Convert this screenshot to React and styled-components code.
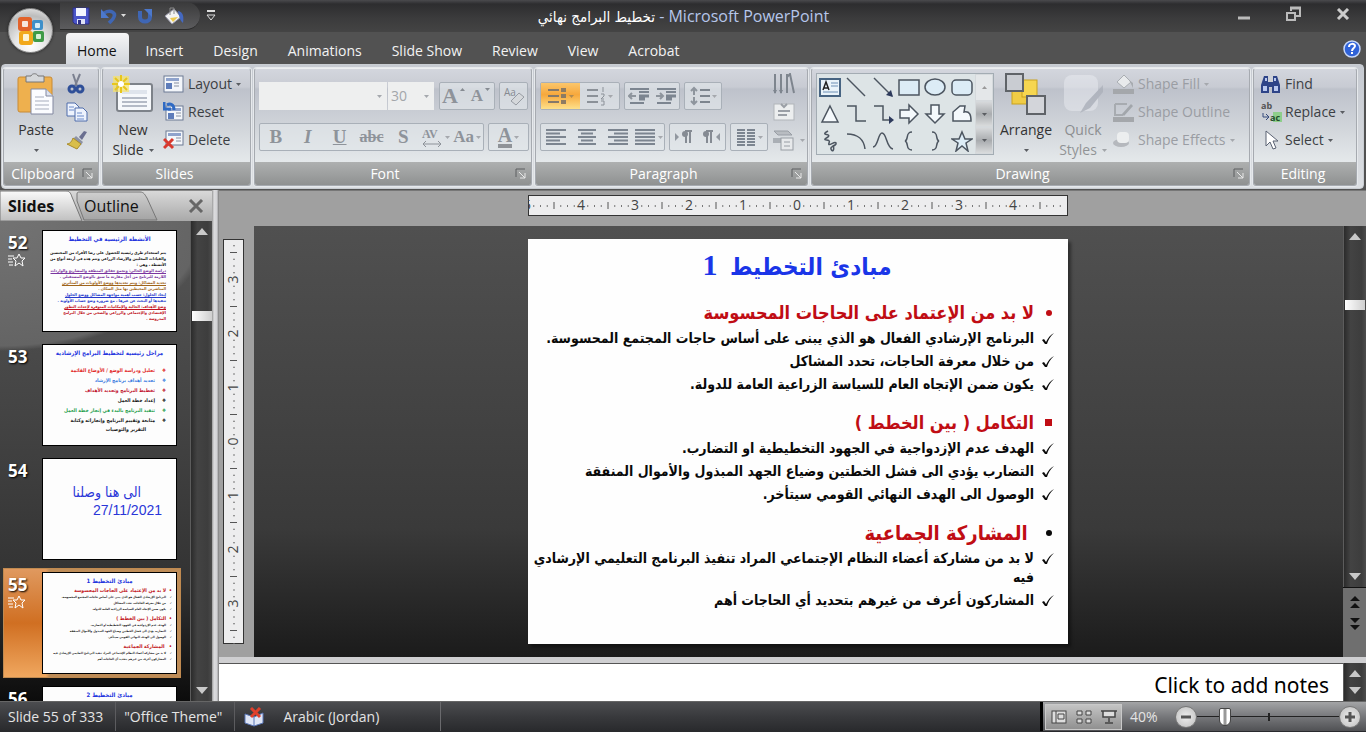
import React from "react";
import styled, { createGlobalStyle, css } from 'styled-components';

const GlobalStyle = createGlobalStyle`
    * {
        box-sizing: border-box;
    }
    body {
        margin: 0;
        background: #525252;
        font-family: "Open Sans", "DejaVu Sans Condensed", "DejaVu Sans", sans-serif;
        font-size: 14px;
        line-height: 20px;
        color: #333;
    }
    button, input, select {
        font: inherit;
        color: inherit;
        margin: 0;
        padding: 0;
        border: 0;
        background: none;
    }
    svg {
        display: block;
        flex: none;
    }
`

const arabicFont = css`
    font-family: "DejaVu Sans Condensed", "DejaVu Sans", sans-serif;
`

const Window = styled.div`
    display: flex;
    flex-direction: column;
    height: 100vh;
    overflow: hidden;
`

/* ---------- title bar ---------- */

const TopArea = styled.header`
    position: relative;
    flex: none;
`

const TitleBar = styled.div`
    display: flex;
    align-items: center;
    height: 32px;
    padding: 0 16px 0 60px;
    background: linear-gradient(#4a4a4d 0, #2d2d2f 4px, #3b3b3c 18px, #444 100%);
`

const QuickAccess = styled.div`
    display: flex;
    align-items: center;
    gap: 10px;
    width: 140px;
    height: 28px;
    padding-left: 12px;
    border-radius: 0 14px 14px 0;
    border-bottom: 1px solid #2a2a2a;
    background: linear-gradient(#3a3a3b, #5c5c5e);
`

const IconButton = styled.button`
    display: flex;
    align-items: center;
    justify-content: center;
    gap: 3px;
`

const WindowTitle = styled.h1`
    flex: 1;
    margin: 0;
    text-align: center;
    font-size: 16px;
    font-weight: 400;
    color: #b6c6ea;
    padding-right: 92px;
`

const DocName = styled.span`
    ${arabicFont}
    font-size: 15px;
    color: #fff;
`

const WindowButtons = styled.div`
    display: flex;
    align-items: center;
    gap: 34px;
    height: 28px;
    align-self: flex-start;
`

const OfficeButton = styled.button`
    position: absolute;
    left: 8px;
    top: 8px;
    width: 45px;
    height: 45px;
    border-radius: 50%;
    border: 1px solid #8a8a8a;
    display: flex;
    align-items: center;
    justify-content: center;
    background: radial-gradient(circle at 50% 85%, #fff 0, #e8e8e8 35%, #bcbcbc 70%, #f4f4f4 100%);
    box-shadow: 0 0 3px #222;
`

const TabBar = styled.nav`
    display: flex;
    height: 32px;
    padding: 1px 5px 0 66px;
    background: #525252;
`

const Tab = styled.button`
    height: 31px;
    padding: 4px 15px 0;
    color: #f2f2f2;
    ${p => p.$active && css`
        padding: 4px 12px 0 11px;
        margin-right: 2px;
        color: #111;
        border-radius: 4px 4px 0 0;
        background: linear-gradient(#f6f6f6, #e0e2e6 60%, #d2d6dc);
    `}
`

const HelpButton = styled(IconButton)`
    margin-left: auto;
`

/* ---------- ribbon ---------- */

const Ribbon = styled.div`
    display: flex;
    flex: none;
    gap: 3px;
    height: 125px;
    margin: 0 2px 1px 1px;
    padding: 3px 6px 2px 1px;
    border-radius: 4px;
    border: 1px solid #c9cdd2;
    background: linear-gradient(#c6cad1, #dcdfe3);
`

const Group = styled.section`
    display: flex;
    flex-direction: column;
    flex: ${p => p.$grow ? 1 : '0 0 auto'};
    width: ${p => p.$width}px;
    border: 1px solid #a6aab0;
    border-top-color: #eceef0;
    border-radius: 3px;
    background: linear-gradient(#d3d6dd 0, #c8cbd3 18px, #bec2cb 20px, #d2d6db 60px, #e6eaec 96px);
    box-shadow: 0 0 0 1px #e6e9ec;
`

const GroupBody = styled.div`
    display: flex;
    gap: ${p => p.$gap || 0}px;
    flex: 1;
    padding: 1px ${p => p.$pad || 4}px 0;
`

const Caption = styled.div`
    display: flex;
    align-items: center;
    height: 23px;
    padding-right: 4px;
    color: #fff;
    background: linear-gradient(#aeb0b0, #8f9191);
    border-radius: 0 0 2px 2px;
`

const CaptionText = styled.span`
    flex: 1;
    text-align: center;
`

const BigButton = styled.button`
    display: flex;
    flex-direction: column;
    align-items: center;
    width: ${p => p.$width}px;
    padding-top: 3px;
    opacity: ${p => p.disabled ? 0.45 : 1};
`

const BigIcon = styled.span`
    display: flex;
    align-items: center;
    justify-content: center;
    height: 42px;
    margin-bottom: 5px;
`

const BigLabel = styled.span`
    display: flex;
    align-items: center;
    justify-content: center;
    gap: 5px;
    height: 20px;
`

const Stack = styled.div`
    display: flex;
    flex-direction: column;
    justify-content: flex-start;
`

const SmallButton = styled.button`
    display: flex;
    align-items: center;
    gap: 4px;
    height: 28px;
    white-space: nowrap;
    color: ${p => p.disabled ? '#9a9da3' : '#3c3f44'};
`

const IconSlot = styled.span`
    display: flex;
    align-items: center;
    justify-content: center;
    width: 21px;
`

const Rows = styled.div`
    display: flex;
    flex-direction: column;
    gap: 13px;
    padding-top: 12px;
`

const Row = styled.div`
    display: flex;
    gap: 4px;
`

const Box = styled.div`
    display: flex;
    align-items: stretch;
    width: ${p => p.$width}px;
    height: 28px;
    border: 1px solid #a9b0b8;
    border-radius: 2px;
    background: rgba(226, 231, 235, 0.6);
`

const Tool = styled.button`
    display: flex;
    flex: 1;
    align-items: center;
    justify-content: center;
    gap: 2px;
    color: #8e939a;
    ${p => p.$on && css`
        background: linear-gradient(#fbc66b, #f7a83c 45%, #fde08a);
    `}
`

const Superscript = styled.span`
    align-self: flex-start;
    padding-top: 5px;
`

const Letter = styled.span`
    font-family: "Liberation Serif", serif;
    font-size: ${p => p.$size || 19}px;
    font-weight: 700;
    font-style: ${p => p.$italic ? 'italic' : 'normal'};
    text-decoration: ${p => p.$line || 'none'};
    border-bottom: ${p => p.$bar ? '4px solid #8f9398' : '0'};
    line-height: 18px;
`

const Select = styled.select`
    appearance: none;
    width: ${p => p.$width}px;
    height: 28px;
    padding: 0 3px;
    color: #a3a6aa;
    background: #eeefef;
    opacity: 1;
`

const SelectWrap = styled.label`
    position: relative;
    display: block;
    svg {
        position: absolute;
        right: 5px;
        top: 13px;
    }
`

const FontBoxes = styled.div`
    display: flex;
    gap: 1px;
    margin-right: 1px;
`

const Gallery = styled.div`
    display: flex;
    width: 178px;
    height: 82px;
    margin-top: 3px;
    border: 1px solid #a3acb3;
    background: #dde4e6;
`

const Shapes = styled.div`
    flex: 1;
    display: grid;
    grid-template-columns: repeat(6, 1fr);
    grid-template-rows: repeat(3, 1fr);
    place-items: center;
`

const GalleryScroll = styled.div`
    display: flex;
    flex-direction: column;
    width: 18px;
`

const GalleryStep = styled.button`
    flex: 1;
    display: flex;
    align-items: center;
    justify-content: center;
    border: 1px solid #d5d9dc;
    background: ${p => p.disabled ? '#e4e7e9' : 'linear-gradient(#d6d8da, #a9acaf 50%, #d9dbdc)'};
`

/* ---------- workspace ---------- */

const Main = styled.main`
    display: flex;
    flex: 1;
    min-height: 0;
`

const SidePanel = styled.aside`
    display: flex;
    flex-direction: column;
    flex: none;
    width: 212px;
    background: #3a3a3a;
`

const PanelTabs = styled.div`
    display: flex;
    align-items: center;
    height: 31px;
    border-top: 1px solid #8a8a8a;
    background: linear-gradient(#d9d9d9, #a9a9a9);
`

const PanelTab = styled.button`
    position: relative;
    height: 30px;
    width: 82px;
    padding: 0 0 1px 8px;
    text-align: left;
    font-size: 16px;
    font-weight: ${p => p.$active ? 700 : 400};
    color: #111;
    z-index: ${p => p.$active ? 1 : 0};
    margin-left: ${p => p.$active ? 0 : -6}px;
`

const TabShape = styled.svg`
    position: absolute;
    left: 0;
    top: 0;
    z-index: -1;
`

const PanelClose = styled(IconButton)`
    margin: 0 8px 0 auto;
`

const PanelBody = styled.div`
    display: flex;
    flex: 1;
    min-height: 0;
    overflow: hidden;
`

const ThumbList = styled.ol`
    flex: 1;
    margin: 0;
    padding: 5px 9px 0 3px;
    list-style: none;
    display: flex;
    flex-direction: column;
    gap: 4px;
    overflow: hidden;
    background:
        radial-gradient(ellipse 210px 130px at 0 0, #737373 0, #646464 96%, transparent 100%),
        linear-gradient(#555 0, #444 40%, #333 75%, #0c0c0c 100%);
`

const ThumbItem = styled.li`
    display: flex;
    flex: none;
    height: 110px;
    padding: 4px;
    color: #fff;
    ${p => p.$selected && css`
        background: linear-gradient(90deg, transparent 24%, #bf8d58 26%), linear-gradient(#e09a60, #d06f22 50%, #f0a860);
        box-shadow: inset 0 0 0 1px #c08a50;
    `}
`

const ThumbMeta = styled.div`
    width: 35px;
    font-weight: 700;
    font-size: 17px;
    line-height: 20px;
    text-shadow: 1px 1px 2px #000;
    padding: 3px 0 0 1px;
`

const ThumbPage = styled.div`
    ${arabicFont}
    width: 135px;
    height: 102px;
    padding: 2px 4px;
    overflow: hidden;
    direction: rtl;
    white-space: nowrap;
    background: #fdfdfd;
    border: 1px solid #000;
    color: #111;
`

const ThumbTitle = styled.div`
    font-size: 6px;
    line-height: 12px;
    font-weight: 700;
    text-align: center;
    color: #2233dd;
    margin-bottom: ${p => p.$space || 0}px;
`

const ThumbLine = styled.div`
    font-size: ${p => p.$size || 4}px;
    line-height: ${p => p.$lead || 6}px;
    font-weight: 700;
    color: ${p => p.$color || '#111'};
    text-decoration: ${p => p.$under ? 'underline' : 'none'};
    padding-right: ${p => p.$indent || 0}px;
    margin-top: ${p => p.$top || 0}px;
`

const ThumbMark = styled.span`
    display: inline-block;
    width: ${p => p.$width || 6}px;
`

const ThumbNote = styled.div`
    padding: ${p => p.$first ? 22 : 0}px ${p => p.$first ? 31 : 10}px 0 0;
    font-family: "Liberation Sans", "DejaVu Sans Condensed", sans-serif;
    font-size: 14px;
    line-height: 18px;
    color: #2a36d8;
`

const ScrollBar = styled.div`
    display: flex;
    flex-direction: column;
    align-items: center;
    flex: none;
    width: ${p => p.$width || 22}px;
    padding: 7px 0;
    background: linear-gradient(90deg, #2b2b2b, #434343 30%, #3d3d3d 80%, #4c4c4c);
    border-left: 1px solid #5c5c5c;
`

const ScrollThumb = styled.div`
    width: 20px;
    height: 10px;
    margin-top: ${p => p.$top}px;
    margin-bottom: auto;
    background: linear-gradient(90deg, #fff, #cfcfcf);
`

const ScrollGap = styled.div`
    flex: 1;
`

const Splitter = styled.div`
    flex: none;
    width: 7px;
    background: linear-gradient(90deg, #9a9a9a, #dcdcde 30%, #d2d2d5 70%, #777);
`

const Editor = styled.div`
    display: flex;
    flex-direction: column;
    flex: 1;
    min-width: 0;
`

const RulerRow = styled.div`
    display: flex;
    justify-content: center;
    flex: none;
    height: 36px;
    padding: 4px 24px 0 34px;
    border-top: 1px solid #777;
    background: #a0a0a0;
`

const Canvas = styled.div`
    display: flex;
    flex: 1;
    min-height: 0;
`

const RulerColumn = styled.div`
    display: flex;
    align-items: center;
    flex: none;
    width: 35px;
    padding-left: 4px;
    background: #a0a0a0;
`

const Stage = styled.div`
    flex: 1;
    display: flex;
    align-items: center;
    justify-content: center;
    padding-right: 1px;
    background: linear-gradient(#505050, #424242 45%, #3a3a3a 70%, #1b1b1b);
`

const SlidePage = styled.article`
    ${arabicFont}
    width: 540px;
    height: 405px;
    padding-right: 12px;
    direction: rtl;
    color: #0a0a0a;
    background: #fefefe;
    font-weight: 700;
    box-shadow: 3px 3px 3px rgba(0, 0, 0, 0.4);
`

const SlideTitle = styled.h2`
    height: 60px;
    margin: 0;
    padding-left: 10px;
    text-align: center;
    font-size: 24px;
    line-height: 52px;
    color: #1a35e8;
`

const SlideNumber = styled.span`
    font-family: "Liberation Serif", serif;
    font-size: 30px;
    margin-right: 5px;
`

const Section = styled.section`
    margin-bottom: 13px;
`

const Heading = styled.h3`
    display: flex;
    align-items: center;
    height: 28px;
    margin: 0;
    font-size: ${p => p.$size}px;
    color: #c00d14;
`

const Bullet = styled.span`
    flex: none;
    width: 22px;
    color: ${p => p.$color || 'inherit'};
    svg {
        margin-right: ${p => p.$check ? 1 : 3}px;
    }
`

const Points = styled.ul`
    margin: 0;
    padding: 0;
    list-style: none;
`

const Point = styled.li`
    display: flex;
    padding: 2px 0;
    font-size: 14px;
    line-height: 19px;
    svg {
        margin-top: 3px;
    }
`

const StepBlock = styled.div`
    display: flex;
    flex-direction: column;
    align-items: center;
    gap: 9px;
    flex: none;
    height: 70px;
    padding-top: 8px;
    border-top: 1px solid #111;
    background: #6f6f6f;
`

const BarColumn = styled.div`
    display: flex;
    flex-direction: column;
    width: 23px;
    > :first-child {
        flex: 1;
    }
`

const NotesRow = styled.div`
    display: flex;
    flex: none;
    height: 44px;
    border-top: 6px solid #cfcfd1;
`

const Notes = styled.input`
    flex: 1;
    height: 38px;
    padding: 4px 14px 0 0;
    text-align: right;
    font-family: "Noto Sans", sans-serif;
    font-size: 21px;
    background: #fff;
    border-top: 1px solid #555;
    &::placeholder {
        color: #000;
        opacity: 1;
    }
`

/* ---------- status bar ---------- */

const StatusBar = styled.footer`
    display: flex;
    flex: none;
    align-items: stretch;
    height: 31px;
    padding-bottom: 1px;
    color: #e4e4e4;
    border-top: 1px solid #666;
    background: linear-gradient(#4c4d50, #38393c 50%, #28292c);
`

const StatusItem = styled.span`
    display: flex;
    align-items: center;
    gap: 16px;
    padding: 0 12px 0 8px;
    border-right: ${p => p.$last ? 0 : 1}px solid #5c5c5f;
`

const StatusGap = styled.div`
    width: 50px;
    border-right: 1px solid #6a6a6d;
`

const ViewArea = styled.div`
    display: flex;
    align-items: center;
    width: 326px;
    margin-left: auto;
    padding: 0 5px 0 2px;
    border-left: 3px solid #000;
    background: linear-gradient(#a3a4a6, #77787b 50%, #505154);
`

const ViewButtons = styled.div`
    display: flex;
    width: 77px;
    height: 26px;
    border: 1px solid #c9c9c9;
    background: linear-gradient(#c4c4c4, #909090);
`

const ZoomText = styled.span`
    width: 53px;
    padding-left: 8px;
`

const RoundButton = styled(IconButton)`
    width: 22px;
    height: 22px;
    border-radius: 50%;
    border: 1px solid #777;
    background: radial-gradient(#eee, #bdbdbd);
`

const ZoomTrack = styled.div`
    position: relative;
    flex: 1;
    display: flex;
    align-items: center;
    &::before {
        content: "";
        position: absolute;
        left: 50%;
        width: 2px;
        height: 8px;
        background: #222;
    }
`

const Slider = styled.input`
    appearance: none;
    position: relative;
    width: 100%;
    height: 22px;
    background: linear-gradient(#222, #222) center / 100% 1px no-repeat;
    &::-webkit-slider-thumb {
        appearance: none;
        width: 12px;
        height: 18px;
        border: 1px solid #444;
        border-radius: 2px 2px 6px 6px;
        background: linear-gradient(90deg, #fff 30%, #999 40%, #999 60%, #fff 70%);
    }
`

/* ---------- icons ---------- */

const Svg = ({ w = 20, h = 20, children, ...rest }) => (
    <svg width={w} height={h} viewBox={`0 0 ${w} ${h}`} fill="none" aria-hidden="true" {...rest}>
        {children}
    </svg>
)

const Caret = ({ color = '#5a5d62', up }) => (
    <Svg w={5} h={3}><path d={up ? 'M0 3h5L2.500 0z' : 'M0 0h5L2.500 3z'} fill={color} /></Svg>
)

const Arrow = ({ up, color = '#c9c9c9' }) => (
    <Svg w={12} h={7}><path d={up ? 'M6 0l6 7H0z' : 'M0 0h12L6 7z'} fill={color} /></Svg>
)

const SaveIcon = () => (
    <Svg w={18} h={18}>
        <path d="M1 1h16v16H3l-2-2z" fill="#4a55c8" stroke="#2c2f86" />
        <path d="M4 1h10v8H4z" fill="#f3f5ff" />
        <path d="M5 12h8v5H5z" fill="#dfe2f5" />
        <path d="M6 13h3v4H6z" fill="#2c2f86" />
    </Svg>
)

const UndoIcon = () => (
    <Svg w={18} h={18}>
        <path d="M4 6c7-4 12 0 10 4-1 3-3 4-5 6" stroke="#3f66b4" strokeWidth="3.500" />
        <path d="M1 2v9h8z" fill="#4c78cc" />
    </Svg>
)

const RepeatIcon = () => (
    <Svg w={18} h={18}>
        <path d="M4 4v6c0 6 10 6 10 0V5" stroke="#3f66b4" strokeWidth="4" />
        <path d="M8 2h8v8z" fill="#4c78cc" />
    </Svg>
)

const BucketIcon = () => (
    <Svg w={20} h={18}>
        <path d="M1 9l9-7 7 8-9 7z" fill="#f3f3f3" stroke="#99a" />
        <path d="M6 8V1h4v6" stroke="#888" />
        <path d="M14 4c5 1 6 5 5 12-3-2-4-7-5-12z" fill="#4468c0" />
        <path d="M6 11l8-1-5 5z" fill="#ecc94e" />
    </Svg>
)

const OfficeLogo = () => (
    <Svg w={30} h={30}>
        <rect x="2" y="1" width="14" height="14" rx="3" fill="#e2622a" />
        <rect x="6" y="5" width="6" height="6" rx="1" fill="#f6e6dc" />
        <rect x="16" y="4" width="11" height="10" rx="2" fill="#3d8fc9" />
        <rect x="19" y="7" width="5" height="5" rx="1" fill="#d7ecf6" />
        <rect x="3" y="15" width="14" height="14" rx="3" fill="#f2a91c" />
        <rect x="7" y="18" width="6" height="7" rx="1" fill="#fdf3d4" />
        <rect x="17" y="15" width="11" height="11" rx="2" fill="#3f9b47" />
        <rect x="20" y="18" width="5" height="5" rx="1" fill="#d8f0d6" />
    </Svg>
)

const PasteIcon = () => (
    <Svg w={38} h={42}>
        <rect x="1" y="4" width="34" height="35" rx="2" fill="#eeb04e" stroke="#c88a35" />
        <path d="M9 3h5c1-3 6-3 7 0h6v6H9z" fill="#d5d7da" stroke="#777" />
        <path d="M14 16h15l7 7v18H14z" fill="#fbfcff" stroke="#8288a0" />
        <path d="M29 16v7h7" fill="#dde2ee" stroke="#8288a0" />
        <path d="M18 24h9M18 28h14M18 32h14M18 36h14" stroke="#a7adbd" />
    </Svg>
)

const CutIcon = () => (
    <Svg w={20} h={22}>
        <path d="M7 1l4 12M14 1L9 13" stroke="#7b8090" strokeWidth="2" />
        <circle cx="6" cy="16" r="3" stroke="#2f4f98" strokeWidth="3" />
        <circle cx="14" cy="16" r="3" stroke="#2f4f98" strokeWidth="3" />
    </Svg>
)

const CopyIcon = () => (
    <Svg w={22} h={20}>
        <path d="M1 1h8l4 4v9H1z" fill="#eef3fd" stroke="#4f6cab" />
        <path d="M9 6h8l4 4v9H9z" fill="#eef3fd" stroke="#4f6cab" />
        <path d="M3 5h5M3 8h5M11 11h5M11 14h7M11 17h7" stroke="#6d8ccb" />
    </Svg>
)

const BrushIcon = () => (
    <Svg w={22} h={20}>
        <path d="M13 7l5-6 3 1-5 8z" fill="#6a6f90" />
        <path d="M10 6l7 6-2 3-8-6z" fill="#8d93a5" />
        <path d="M7 8l8 6-4 5-10-5c3 0 5-3 6-6z" fill="#d9be4a" stroke="#a98c2a" />
    </Svg>
)

const NewSlideIcon = () => (
    <Svg w={42} h={40}>
        <rect x="5" y="10" width="35" height="27" rx="2" fill="#f6f8fb" stroke="#7d8289" strokeWidth="2" />
        <path d="M10 16h25v4H10z" fill="#dfe4ec" />
        <path d="M10 24h25M10 28h25M10 32h25" stroke="#b4bac6" strokeWidth="2" />
        <rect x="1" y="2" width="16" height="16" fill="#f7e36a" opacity="0.7" />
        <path d="M9 1v18M0 10h18M3 4l12 12M15 4L3 16" stroke="#e8c61c" strokeWidth="2" />
        <circle cx="9" cy="10" r="3" fill="#fff" />
    </Svg>
)

const LayoutIcon = ({ mark }) => (
    <Svg w={21} h={22}>
        <g transform={mark === 'reset' ? 'translate(2 3)' : mark === 'delete' ? 'translate(2 0)' : 'translate(0 1)'}>
            <rect x="1" y="2" width={mark ? 17 : 19} height={mark ? 14 : 16} fill="#f3f6fa" stroke="#6d7a94" />
            <path d="M3 4h13v3H3z" fill="#8fa3cc" />
            {mark !== 'delete' && <path d="M3 9h6v6H3z" fill="#5d7cba" />}
            <path d="M11 9h5M11 12h5" stroke="#8890a0" />
        </g>
        {mark === 'reset' && <path d="M11 9C11 3 7 2 4 4M1 1v7h7" stroke="#2f6ac4" strokeWidth="3" />}
        {mark === 'delete' && <path d="M1 10l9 9M10 10l-9 9" stroke="#d8392e" strokeWidth="3" />}
    </Svg>
)

const ListIcon = ({ kind }) => {
    const rights = { left: [21, 15, 21, 15, 21], center: [20, 17, 20, 17, 20], right: [21, 21, 21, 21, 21], full: [21, 21, 21, 21, 21] }[kind]
    const lefts = { left: [1, 1, 1, 1, 1], center: [2, 5, 2, 5, 2], right: [1, 7, 1, 7, 1], full: [1, 1, 1, 1, 1] }[kind]
    return (
        <Svg w={22} h={18}>
            {rights.map((r, i) => <path key={i} d={`M${lefts[i]} ${2 + i * 3.5}H${r}`} stroke="#7c8590" strokeWidth="2" />)}
        </Svg>
    )
}

const BulletsIcon = ({ numbers }) => (
    <Svg w={20} h={20}>
        <path d="M1 4h11M1 10h11M1 16h11" stroke={numbers ? '#8b9198' : '#85796a'} strokeWidth="2" />
        {numbers
            ? <path d="M17 1v5M15 8h3v2l-3 3h3M15 15h3v4h-3" stroke="#8b9198" />
            : <path d="M14 4h5M14 10h5M14 16h5" stroke="#8d7b62" strokeWidth="4" />}
    </Svg>
)

const IndentIcon = ({ flip }) => (
    <Svg w={22} h={20}>
        <path d="M2 3h19M11 6h10M2 17h14" stroke="#7c8590" strokeWidth="2" />
        <path d="M11 10h10M11 13h6" stroke="#7c8590" strokeWidth="3" />
        <path d={flip ? 'M1 10h7M5 7l3 3-3 3' : 'M8 10H1M4 7l-3 3 3 3'} stroke="#8e959d" strokeWidth="2" />
    </Svg>
)

const SpacingIcon = () => (
    <Svg w={20} h={20}>
        <path d="M4 9V2M1 5l3-3 3 3M4 11v7M1 15l3 3 3-3" stroke="#8e959d" strokeWidth="2" />
        <path d="M10 4h10M10 10h10M10 16h10" stroke="#7d858e" strokeWidth="2" />
    </Svg>
)

const ColumnsIcon = () => (
    <Svg w={20} h={18}>
        <path d="M1 2h8M11 2h8M1 5h8M11 5h8M1 8h8M11 8h8M1 11h8M11 11h8M1 14h8M11 14h8M1 17h8M11 17h8" stroke="#7c8590" strokeWidth="2" />
    </Svg>
)

const PilcrowIcon = ({ flip }) => (
    <Svg w={20} h={18}>
        <path d={flip ? 'M19 5v8l-4-4z' : 'M1 5v8l4-4z'} fill="#9298a0" />
        <g transform={flip ? 'translate(-6 0)' : ''}>
            <path d="M12 15V3M16 15V3M18 3h-7" stroke="#858b93" strokeWidth="2" />
            <circle cx="11" cy="6" r="3" fill="#858b93" />
        </g>
    </Svg>
)

const DirectionIcon = () => (
    <Svg w={24} h={22}>
        <path d="M3 1v19M9 1v19M15 1v19M15 4l3-3 4 19" stroke="#7e858e" strokeWidth="2" />
        <path d="M1 17l2 4 2-4M7 17l2 4 2-4" fill="#7e858e" />
    </Svg>
)

const AlignTextIcon = () => (
    <Svg w={24} h={20}>
        <rect x="2" y="2" width="20" height="16" fill="#eceeef" stroke="#b1b5ba" />
        <path d="M9 2l3 3 3-3M6 9h12M6 13h9" stroke="#9a9fa6" strokeWidth="2" />
    </Svg>
)

const SmartArtIcon = () => (
    <Svg w={24} h={22}>
        <path d="M2 2h14l4 4H6z" fill="#b8bcc1" stroke="#989da4" />
        <rect x="1" y="9" width="10" height="5" fill="#aaafb5" />
        <rect x="9" y="9" width="12" height="12" fill="#e7e9eb" stroke="#989da4" />
        <path d="M12 13h6M12 17h6" stroke="#989da4" />
    </Svg>
)

const shapeStroke = { stroke: '#4c5560', strokeWidth: 1.5 }

const shapeDrawings = [
    <g key="0"><rect x="1" y="3" width="20" height="17" fill="#e9f3fa" stroke="#476482" strokeWidth="2" /><path d="M4 14l3-8 3 8M5 12h4" stroke="#222" strokeWidth="1.500" /><path d="M12 7h7M12 10h7M4 16h15" stroke="#6d8fb5" /></g>,
    <path key="1" d="M2 2l18 18" {...shapeStroke} />,
    <g key="2"><path d="M2 2l18 18" {...shapeStroke} /><path d="M21 21l-7-2 5-5z" fill="#2d3a5c" /></g>,
    <rect key="3" x="1" y="4" width="20" height="15" fill="#dcecf6" {...shapeStroke} />,
    <ellipse key="4" cx="11" cy="11" rx="10" ry="8" fill="#dcecf6" {...shapeStroke} />,
    <rect key="5" x="1" y="4" width="20" height="15" rx="4" fill="#dcecf6" {...shapeStroke} />,
    <path key="6" d="M11 3l8 16H3z" fill="#f4f9fc" {...shapeStroke} />,
    <path key="7" d="M2 3h9v15h10" {...shapeStroke} />,
    <g key="8"><path d="M2 3h9v14h9" {...shapeStroke} /><path d="M22 17l-5-4v8z" fill="#2d3a5c" /></g>,
    <path key="9" d="M2 7h9V2l9 9-9 9v-5H2z" fill="#f4f9fc" {...shapeStroke} />,
    <path key="10" d="M7 2v9H2l9 9 9-9h-5V2z" fill="#f4f9fc" {...shapeStroke} />,
    <path key="11" d="M2 18V9l7-6h5l-1 6c6-1 7 3 7 9z" fill="#f4f9fc" {...shapeStroke} />,
    <path key="12" d="M9 1c-9 5 4 2 0 6-9 5 4 1 1 6-2 5 8-4 7 1-2 3-6 2-5 5s4 2 2-4" {...shapeStroke} />,
    <path key="13" d="M2 4c11 0 17 6 18 15" {...shapeStroke} />,
    <path key="14" d="M1 17C6 17 6 3 10 3c5 0 4 15 11 16" {...shapeStroke} />,
    <path key="15" d="M14 2c-7 0-3 8-7 9 4 1 0 9 7 9" {...shapeStroke} />,
    <path key="16" d="M8 2c7 0 3 8 7 9-4 1 0 9-7 9" {...shapeStroke} />,
    <path key="17" d="M11 2l3 7h7l-6 4 2 8-6-5-6 5 2-8-6-4h7z" fill="#dcecf6" {...shapeStroke} />,
]

const ArrangeIcon = () => (
    <Svg w={42} h={42}>
        <rect x="7" y="17" width="17" height="14" fill="#f0cc45" stroke="#c9a21f" />
        <rect x="17" y="7" width="15" height="17" fill="#f6d650" stroke="#c9a21f" />
        <rect x="1" y="1" width="17" height="17" fill="#c9ccd2" stroke="#5f6368" strokeWidth="2" />
        <rect x="22" y="23" width="18" height="18" fill="#d3d5da" stroke="#5f6368" strokeWidth="2" />
    </Svg>
)

const QuickStylesIcon = () => (
    <Svg w={42} h={42}>
        <rect x="2" y="2" width="34" height="36" rx="8" fill="#eef0f5" />
        <path d="M41 12L24 30l-6 10 10-5 13-16z" fill="#9da2ad" />
    </Svg>
)

const OutlineIcon = () => (
    <Svg w={21} h={20}>
        <path d="M2 2h12M2 2v11h8" stroke="#a7abb0" strokeWidth="2" />
        <path d="M9 12L18 2l2 2-9 10z" fill="#a2a6ab" />
        <path d="M0 15h21v5H0z" fill="#a4a7ab" />
    </Svg>
)

const FillIcon = () => (
    <Svg w={21} h={20}>
        <path d="M4 8l7-7 7 7-7 6z" fill="#e8eaec" stroke="#a9adb2" />
        <path d="M16 6l4 3v5z" fill="#a7abb0" />
        <path d="M0 15h21v5H0z" fill="#a4a7ab" />
    </Svg>
)

const EffectsIcon = () => (
    <Svg w={21} h={20}>
        <ellipse cx="8" cy="13" rx="8" ry="4" fill="#b5b8bd" />
        <rect x="4" y="2" width="12" height="11" rx="4" fill="#eceeef" />
    </Svg>
)

const FindIcon = () => (
    <Svg w={21} h={20}>
        <path d="M4 2h4v6h5V2h4l3 9v8h-8v-6h-3v6H1v-8z" fill="#2e4488" />
        <path d="M3 12h4v5H3zM14 12h4v5h-4zM5 4h2v3H5zM14 4h2v3h-2z" fill="#b9c8ef" />
    </Svg>
)

const ReplaceIcon = () => (
    <Svg w={22} h={26}>
        <rect x="13" y="13" width="9" height="10" fill="#8fce8b" />
        <path d="M3 14v4h5M6 15l3 3-3 3" stroke="#344a7c" />
        <text x="1" y="10" fontSize="9" fontWeight="700" fill="#555">ab</text>
        <text x="10" y="22" fontSize="9" fontWeight="700" fill="#1f4d2a">ac</text>
    </Svg>
)

const SelectIcon = () => (
    <Svg w={16} h={20}>
        <path d="M3 1v15l4-4 3 7 3-1-3-7h5z" fill="#fff" stroke="#5a6273" />
    </Svg>
)

const LauncherIcon = () => (
    <Svg w={12} h={12}>
        <path d="M1 9V1h9" stroke="#5c5e60" />
        <path d="M4 4l6 6M10 5v5H5" stroke="#e9e9e9" />
    </Svg>
)

const StarIcon = () => (
    <Svg w={18} h={14}>
        <path d="M11 1l2 4h4l-3 3 1 5-4-3-4 3 1-5-3-3h4z" stroke="#fff" />
        <path d="M0 3h6M0 6h4M0 9h5M1 12h4" stroke="#fff" />
    </Svg>
)

const CheckIcon = () => (
    <Svg w={14} h={14}>
        <path d="M1 8l2-1 2 3C7 6 9 3 13 1 9 5 7 8 6 12H4z" fill="#0a0a0a" />
    </Svg>
)

/* ---------- rulers ---------- */

const unit = 54

const Ruler = ({ length, vertical }) => {
    const mid = vertical ? length / 2 : length / 2 - 1
    const count = Math.floor(mid / (unit / 8)) + (vertical ? 0 : 1)
    const marks = []
    for (let i = -count; i < count; i++) {
        const pos = mid + i * unit / 8
        if (i % 8 === 0) {
            marks.push(<text key={i} x={pos} y="15" textAnchor="middle" fontSize="14" fill="#444">{Math.abs(i / 8)}</text>)
        } else if (i % 4 === 0) {
            marks.push(<path key={i} d={`M${pos} 7v7`} stroke="#555" />)
        } else {
            marks.push(<path key={i} d={`M${pos} 10v2`} stroke="#777" />)
        }
    }
    const strip = (
        <>
            <rect x="0.500" y="0.500" width={length - 1} height="20" fill="#ededee" stroke="#333" />
            {marks}
        </>
    )
    return vertical
        ? <Svg w={21} h={length}><g transform={`translate(0 ${length}) rotate(-90)`}>{strip}</g></Svg>
        : <Svg w={length} h={21}>{strip}</Svg>
}

/* ---------- slide data ---------- */

const sections = [
    {
        mark: 'dot',
        markColor: '#c00d14',
        size: 18,
        title: 'لا بد من الإعتماد على الحاجات المحسوسة',
        points: [
            'البرنامج الإرشادي الفعال هو الذي يبنى على أساس حاجات المجتمع المحسوسة.',
            'من خلال معرفة الحاجات، تحدد المشاكل',
            'يكون ضمن الإتجاه العام للسياسة الزراعية العامة للدولة.',
        ],
    },
    {
        mark: 'square',
        markColor: '#c00d14',
        size: 18,
        title: 'التكامل ( بين الخطط )',
        points: [
            'الهدف عدم الإزدواجية في الجهود التخطيطية او التضارب.',
            'التضارب يؤدي الى فشل الخطتين وضياع الجهد المبذول والأموال المنفقة',
            'الوصول الى الهدف النهائي القومي سيتأخر.',
        ],
    },
    {
        mark: 'dot',
        markColor: '#0a0a0a',
        size: 20,
        title: '\u00a0المشاركة الجماعية',
        points: [
            'لا بد من مشاركة أعضاء النظام الإجتماعي المراد تنفيذ البرنامج التعليمي الإرشادي فيه',
            'المشاركون أعرف من غيرهم بتحديد أي الحاجات أهم',
        ],
    },
]

const activities = [
    ['#111', 'يتم استخدام طرق رئيسية للحصول على رضا الأفراد من المختصين'],
    ['#111', 'والقيادات المحليين والإرشاد الزراعي وتتم هذه في أربعة أنواع من'],
    ['#111', 'الأنشطة ، وهي :'],
    ['#7a35a0', 'دراسة الوضع الحالي: وتجمع حقائق المنطقة والمشاريع والواردات', true],
    ['#7a35a0', 'اللازمة للبرنامج من أجل مقارنة ما سبق بالوضع المستقبلي .'],
    ['#a0651a', 'تحديد المشاكل: ويتم تحديدها ووضع الأولويات من المتأثرين', true],
    ['#a0651a', 'المباشرين المحيطين بها مثل السكان .'],
    ['#2438cc', 'إيجاد الحلول: حسب أهمية مواجهة المشاكل ووضع الحلول', true],
    ['#2438cc', 'تنفيذها أو البحث عن غيرها ، مع ضرورة وضع حساب الأولوية .'],
    ['#c01020', 'وضع الأهداف: الحالية والإمكانيات المتوفرة لإحداث التطور', true],
    ['#c01020', 'الإقتصادي والإجتماعي والزراعي والصحي من خلال البرامج'],
    ['#c01020', 'المدروسة .'],
]

const stages = [
    ['#e01a1a', 'تحليل ودراسة الوضع / الأوضاع القائمة'],
    ['#3a7be0', 'تحديد أهداف برنامج الإرشاد'],
    ['#c0102c', 'تخطيط البرنامج وتحديد الأهداف'],
    ['#111', 'إعداد خطة العمل'],
    ['#1f9d4d', 'تنفيذ البرنامج بالبدء في إنجاز خطة العمل'],
    ['#111', 'متابعة وتقييم البرنامج وإنجازاته وكتابة'],
]

const tabs = ['Home', 'Insert', 'Design', 'Animations', 'Slide Show', 'Review', 'View', 'Acrobat']

const Launcher = () => <IconButton aria-label="More options"><LauncherIcon /></IconButton>

const RibbonGroup = ({ name, width, gap, pad, launcher, grow, children }) => (
    <Group $width={width} $grow={grow} aria-label={name}>
        <GroupBody $gap={gap} $pad={pad}>{children}</GroupBody>
        <Caption>
            <CaptionText>{name}</CaptionText>
            {launcher && <Launcher />}
        </Caption>
    </Group>
)

const Action = ({ icon, label, caret, disabled }) => (
    <SmallButton disabled={disabled}>
        <IconSlot>{icon}</IconSlot>
        {label}
        {caret && <Caret color={disabled ? '#a5a8ad' : undefined} />}
    </SmallButton>
)

const Clipboard = () => (
    <RibbonGroup name="Clipboard" width={96} gap={5} pad={7} launcher>
        <BigButton $width={50}>
            <BigIcon><PasteIcon /></BigIcon>
            <BigLabel>Paste</BigLabel>
            <BigLabel><Caret /></BigLabel>
        </BigButton>
        <Stack>
            <SmallButton aria-label="Cut"><CutIcon /></SmallButton>
            <SmallButton aria-label="Copy"><CopyIcon /></SmallButton>
            <SmallButton aria-label="Format Painter"><BrushIcon /></SmallButton>
        </Stack>
    </RibbonGroup>
)

const SlidesGroup = () => (
    <RibbonGroup name="Slides" width={149} gap={4}>
        <BigButton $width={52}>
            <BigIcon><NewSlideIcon /></BigIcon>
            <BigLabel>New</BigLabel>
            <BigLabel>Slide <Caret /></BigLabel>
        </BigButton>
        <Stack>
            <Action icon={<LayoutIcon />} label="Layout" caret />
            <Action icon={<LayoutIcon mark="reset" />} label="Reset" />
            <Action icon={<LayoutIcon mark="delete" />} label="Delete" />
        </Stack>
    </RibbonGroup>
)

const FontGroup = () => (
    <RibbonGroup name="Font" width={278} launcher>
        <Rows>
            <Row>
                <FontBoxes>
                    <SelectWrap>
                        <Select $width={128} disabled aria-label="Font name"><option></option></Select>
                        <Caret color="#a5a8ad" />
                    </SelectWrap>
                    <SelectWrap>
                        <Select $width={46} disabled aria-label="Font size"><option>30</option></Select>
                        <Caret color="#a5a8ad" />
                    </SelectWrap>
                </FontBoxes>
                <Box $width={56}>
                    <Tool aria-label="Grow font"><Letter $size={22}>A</Letter><Superscript><Caret up color="#868b92" /></Superscript></Tool>
                    <Tool aria-label="Shrink font"><Letter $size={17}>A</Letter><Superscript><Caret color="#868b92" /></Superscript></Tool>
                </Box>
                <Box $width={29}>
                    <Tool aria-label="Clear formatting">
                        <Svg w={22} h={20}>
                            <text x="1" y="10" fontSize="10" fill="#858a91">Aa</text>
                            <path d="M8 15l8-8 5 4-8 8z" fill="#d5d8db" stroke="#979ca3" />
                        </Svg>
                    </Tool>
                </Box>
            </Row>
            <Row>
                <Box $width={225}>
                    <Tool><Letter>B</Letter></Tool>
                    <Tool><Letter $italic>I</Letter></Tool>
                    <Tool><Letter $line="underline">U</Letter></Tool>
                    <Tool><Letter $size={16} $line="line-through">abc</Letter></Tool>
                    <Tool><Letter>S</Letter></Tool>
                    <Tool>
                        <Svg w={22} h={20}>
                            <text x="1" y="11" fontSize="12" fontWeight="700" fontFamily="Liberation Serif" fill="#8e939a">AV</text>
                            <path d="M2 17h18M5 14l-3 3 3 3M17 14l3 3-3 3" stroke="#8d9299" />
                        </Svg>
                        <Caret color="#a5a8ad" />
                    </Tool>
                    <Tool><Letter $size={17}>Aa</Letter><Caret color="#a5a8ad" /></Tool>
                </Box>
                <Box $width={41}>
                    <Tool><Letter $size={20} $bar>A</Letter><Caret color="#a5a8ad" /></Tool>
                </Box>
            </Row>
        </Rows>
    </RibbonGroup>
)

const ParagraphGroup = () => (
    <RibbonGroup name="Paragraph" width={273} gap={4} launcher>
        <Rows>
            <Row>
                <Box $width={80}>
                    <Tool $on aria-label="Bullets"><BulletsIcon /><Caret color="#b08a50" /></Tool>
                    <Tool aria-label="Numbering"><BulletsIcon numbers /><Caret color="#a5a8ad" /></Tool>
                </Box>
                <Box $width={56}>
                    <Tool aria-label="Decrease indent"><IndentIcon /></Tool>
                    <Tool aria-label="Increase indent"><IndentIcon flip /></Tool>
                </Box>
                <Box $width={38}>
                    <Tool aria-label="Line spacing"><SpacingIcon /><Caret color="#a5a8ad" /></Tool>
                </Box>
            </Row>
            <Row>
                <Box $width={125}>
                    <Tool aria-label="Align left"><ListIcon kind="left" /></Tool>
                    <Tool aria-label="Center"><ListIcon kind="center" /></Tool>
                    <Tool aria-label="Align right"><ListIcon kind="right" /></Tool>
                    <Tool aria-label="Justify"><ListIcon kind="full" /><Caret color="#a5a8ad" /></Tool>
                </Box>
                <Box $width={57}>
                    <Tool aria-label="Left to right"><PilcrowIcon /></Tool>
                    <Tool aria-label="Right to left"><PilcrowIcon flip /></Tool>
                </Box>
                <Box $width={38}>
                    <Tool aria-label="Columns"><ColumnsIcon /><Caret color="#a5a8ad" /></Tool>
                </Box>
            </Row>
        </Rows>
        <Stack>
            <SmallButton disabled aria-label="Text direction"><DirectionIcon /></SmallButton>
            <SmallButton disabled aria-label="Align text"><AlignTextIcon /></SmallButton>
            <SmallButton disabled aria-label="Convert to SmartArt"><SmartArtIcon /><Caret color="#a5a8ad" /></SmallButton>
        </Stack>
    </RibbonGroup>
)

const DrawingGroup = () => (
    <RibbonGroup name="Drawing" width={439} gap={5} launcher grow>
        <Gallery>
            <Shapes>
                {shapeDrawings.map((shape, i) => <Svg key={i} w={22} h={22}>{shape}</Svg>)}
            </Shapes>
            <GalleryScroll>
                <GalleryStep disabled aria-label="Previous shapes"><Caret up color="#999" /></GalleryStep>
                <GalleryStep aria-label="Next shapes"><Caret /></GalleryStep>
                <GalleryStep aria-label="All shapes"><Caret /></GalleryStep>
            </GalleryScroll>
        </Gallery>
        <BigButton $width={54}>
            <BigIcon><ArrangeIcon /></BigIcon>
            <BigLabel>Arrange</BigLabel>
            <BigLabel><Caret /></BigLabel>
        </BigButton>
        <BigButton $width={50} disabled>
            <BigIcon><QuickStylesIcon /></BigIcon>
            <BigLabel>Quick</BigLabel>
            <BigLabel>Styles <Caret /></BigLabel>
        </BigButton>
        <Stack>
            <Action icon={<FillIcon />} label="Shape Fill" caret disabled />
            <Action icon={<OutlineIcon />} label="Shape Outline" disabled />
            <Action icon={<EffectsIcon />} label="Shape Effects" caret disabled />
        </Stack>
    </RibbonGroup>
)

const EditingGroup = () => (
    <RibbonGroup name="Editing" width={104} pad={6}>
        <Stack>
            <Action icon={<FindIcon />} label="Find" />
            <Action icon={<ReplaceIcon />} label="Replace" caret />
            <Action icon={<SelectIcon />} label="Select" caret />
        </Stack>
    </RibbonGroup>
)

const Mark = ({ kind }) => (
    <Svg w={8} h={8}>
        {kind === 'dot' ? <circle cx="4" cy="4" r="3" fill="currentColor" /> : <rect width="7" height="7" fill="currentColor" />}
    </Svg>
)

const Slide = () => (
    <SlidePage lang="ar">
        <SlideTitle>مبادئ التخطيط <SlideNumber>1</SlideNumber></SlideTitle>
        {sections.map(s => (
            <Section key={s.title}>
                <Heading $size={s.size}><Bullet $color={s.markColor}><Mark kind={s.mark} /></Bullet>{s.title}</Heading>
                <Points>
                    {s.points.map(text => (
                        <Point key={text}><Bullet $check><CheckIcon /></Bullet><span>{text}</span></Point>
                    ))}
                </Points>
            </Section>
        ))}
    </SlidePage>
)

const Thumb = ({ number, star, selected, children }) => (
    <ThumbItem $selected={selected}>
        <ThumbMeta>{number}{star && <StarIcon />}</ThumbMeta>
        <ThumbPage lang="ar">{children}</ThumbPage>
    </ThumbItem>
)

const Thumbnails = () => (
    <ThumbList>
        <Thumb number={52} star>
            <ThumbTitle $space={5}>الأنشطة الرئيسية في التخطيط</ThumbTitle>
            {activities.map(([color, text, under]) => (
                <ThumbLine key={text} $color={color} $under={under} $indent={6}>{text}</ThumbLine>
            ))}
        </Thumb>
        <Thumb number={53}>
            <ThumbTitle $space={6}>مراحل رئيسية لتخطيط البرامج الإرشادية</ThumbTitle>
            {stages.map(([color, text]) => (
                <ThumbLine key={text} $color={color} $size={5} $lead={10} $indent={6}>
                    <ThumbMark $width={11}>❖</ThumbMark>{text}
                </ThumbLine>
            ))}
            <ThumbLine $size={5} $lead={8} $indent={26}>التقرير والتوصيات</ThumbLine>
        </Thumb>
        <Thumb number={54}>
            <ThumbNote $first>الى هنا وصلنا</ThumbNote>
            <ThumbNote>27/11/2021</ThumbNote>
        </Thumb>
        <Thumb number={55} star selected>
            <ThumbTitle>مبادئ التخطيط 1</ThumbTitle>
            {sections.map((s, i) => (
                <React.Fragment key={s.title}>
                    <ThumbLine $size={5} $lead={7} $color="#c00d14" $top={i === 0 ? 0 : 3}><ThumbMark>•</ThumbMark>{s.title}</ThumbLine>
                    {s.points.map(text => (
                        <ThumbLine key={text} $size={3}><ThumbMark>✓</ThumbMark>{text}</ThumbLine>
                    ))}
                </React.Fragment>
            ))}
        </Thumb>
        <Thumb number={56}>
            <ThumbTitle>مبادئ التخطيط 2</ThumbTitle>
        </Thumb>
    </ThumbList>
)

const App = () => (
    <Window>
        <GlobalStyle />
        <TopArea>
            <TitleBar>
                <QuickAccess>
                    <IconButton aria-label="Save"><SaveIcon /></IconButton>
                    <IconButton aria-label="Undo"><UndoIcon /><Caret color="#ddd" /></IconButton>
                    <IconButton aria-label="Repeat"><RepeatIcon /></IconButton>
                    <IconButton aria-label="Fill"><BucketIcon /></IconButton>
                </QuickAccess>
                <IconButton aria-label="Customize toolbar">
                    <Svg w={22} h={12}><path d="M7 1h8" stroke="#ddd" strokeWidth="2" /><path d="M7 5h8l-4 5z" stroke="#ddd" /></Svg>
                </IconButton>
                <WindowTitle><DocName lang="ar">تخطيط البرامج نهائي</DocName> - Microsoft PowerPoint</WindowTitle>
                <WindowButtons>
                    <IconButton aria-label="Minimize"><Svg w={14} h={14}><path d="M1 11h12" stroke="#bbb" strokeWidth="3" /></Svg></IconButton>
                    <IconButton aria-label="Restore">
                        <Svg w={17} h={16}><path d="M6 5V2h9v8h-4" stroke="#bbb" strokeWidth="2" /><path d="M5 2h11" stroke="#bbb" strokeWidth="3" /><rect x="2" y="7" width="8" height="7" stroke="#bbb" strokeWidth="2" /></Svg>
                    </IconButton>
                    <IconButton aria-label="Close"><Svg w={14} h={12}><path d="M2 1l10 10M12 1L2 11" stroke="#ccc" strokeWidth="3" /></Svg></IconButton>
                </WindowButtons>
            </TitleBar>
            <TabBar>
                {tabs.map(name => <Tab key={name} $active={name === 'Home'}>{name}</Tab>)}
                <HelpButton aria-label="Help">
                    <Svg w={18} h={18}>
                        <circle cx="9" cy="9" r="8" fill="#2f62d8" stroke="#c8d8fa" strokeWidth="1.500" />
                        <path d="M6 7c0-4 6-4 6-1 0 2-3 2-3 5M9 12v2" stroke="#fff" strokeWidth="2" />
                    </Svg>
                </HelpButton>
            </TabBar>
            <OfficeButton aria-label="Office menu"><OfficeLogo /></OfficeButton>
        </TopArea>
        <Ribbon>
            <Clipboard />
            <SlidesGroup />
            <FontGroup />
            <ParagraphGroup />
            <DrawingGroup />
            <EditingGroup />
        </Ribbon>
        <Main>
            <SidePanel>
                <PanelTabs>
                    <PanelTab $active>
                        <TabShape width="82" height="30" aria-hidden="true">
                            <defs>
                                <linearGradient id="tabOn" x2="0" y2="1"><stop stopColor="#fafafa" /><stop offset="1" stopColor="#c0c0c0" /></linearGradient>
                            </defs>
                            <path d="M0 0h66c4 0 5 3 6 6l10 24H0z" fill="url(#tabOn)" stroke="#777" />
                        </TabShape>
                        Slides
                    </PanelTab>
                    <PanelTab>
                        <TabShape width="82" height="30" aria-hidden="true">
                            <defs>
                                <linearGradient id="tabOff" x2="0" y2="1"><stop stopColor="#cfcfcf" /><stop offset="1" stopColor="#a4a4a4" /></linearGradient>
                            </defs>
                            <path d="M1 3c0-2 1-2 3-2h60c4 0 5 3 7 6l10 22H8L1 10z" fill="url(#tabOff)" stroke="#777" />
                        </TabShape>
                        Outline
                    </PanelTab>
                    <PanelClose aria-label="Close panel"><Svg w={16} h={14}><path d="M2 1l12 12M14 1L2 13" stroke="#666" strokeWidth="3" /></Svg></PanelClose>
                </PanelTabs>
                <PanelBody>
                    <Thumbnails />
                    <ScrollBar>
                        <Arrow up />
                        <ScrollThumb $top={76} />
                        <Arrow />
                    </ScrollBar>
                </PanelBody>
            </SidePanel>
            <Splitter />
            <Editor>
                <RulerRow><Ruler length={540} /></RulerRow>
                <Canvas>
                    <RulerColumn><Ruler length={405} vertical /></RulerColumn>
                    <Stage><Slide /></Stage>
                    <BarColumn>
                        <ScrollBar $width={23}>
                            <Arrow up />
                            <ScrollThumb $top={60} />
                            <Arrow />
                        </ScrollBar>
                        <StepBlock>
                            <IconButton aria-label="Previous slide"><Svg w={10} h={13}><path d="M5 0l5 5H0zM5 7l5 5H0z" fill="#111" /></Svg></IconButton>
                            <IconButton aria-label="Next slide"><Svg w={10} h={13}><path d="M0 0h10L5 5zM0 7h10l-5 5z" fill="#111" /></Svg></IconButton>
                        </StepBlock>
                    </BarColumn>
                </Canvas>
                <NotesRow>
                    <Notes placeholder="Click to add notes" aria-label="Notes" />
                    <ScrollBar $width={23}>
                        <Arrow up />
                        <ScrollGap />
                        <Arrow />
                    </ScrollBar>
                </NotesRow>
            </Editor>
        </Main>
        <StatusBar>
            <StatusItem>Slide 55 of 333</StatusItem>
            <StatusItem>"Office Theme"</StatusItem>
            <StatusItem $last>
                <Svg w={24} h={20}>
                    <path d="M2 7l9 3 9-4v10l-9 3-9-3z" fill="#dfe6f6" stroke="#5b77b8" />
                    <path d="M11 10v9" stroke="#5b77b8" />
                    <path d="M8 1l9 9M17 1l-9 9" stroke="#e0402c" strokeWidth="3" />
                </Svg>
                Arabic (Jordan)
            </StatusItem>
            <StatusGap />
            <ViewArea>
                <ViewButtons>
                    <Tool aria-label="Normal view"><Svg w={16} h={14}><rect x="1" y="1" width="14" height="12" fill="#ddd" stroke="#444" /><path d="M5 1v12M7 4h6v5H7z" stroke="#444" /></Svg></Tool>
                    <Tool aria-label="Slide sorter"><Svg w={16} h={14}><path d="M1 1h5v4H1zM10 1h5v4h-5zM1 9h5v4H1zM10 9h5v4h-5z" fill="#ddd" stroke="#444" /></Svg></Tool>
                    <Tool aria-label="Slide show"><Svg w={16} h={14}><path d="M2 1h12v6H2z" fill="#ddd" /><path d="M0 1h16M2 1v6h12V1M8 8v4M4 13h8" stroke="#444" strokeWidth="1.500" /></Svg></Tool>
                </ViewButtons>
                <ZoomText>40%</ZoomText>
                <RoundButton aria-label="Zoom out"><Svg w={12} h={12}><path d="M1 6h10" stroke="#555" strokeWidth="3" /></Svg></RoundButton>
                <ZoomTrack><Slider type="range" min="0" max="100" defaultValue="17" aria-label="Zoom" /></ZoomTrack>
                <RoundButton aria-label="Zoom in"><Svg w={12} h={12}><path d="M1 6h10M6 1v10" stroke="#555" strokeWidth="3" /></Svg></RoundButton>
            </ViewArea>
        </StatusBar>
    </Window>
)

export default App;
